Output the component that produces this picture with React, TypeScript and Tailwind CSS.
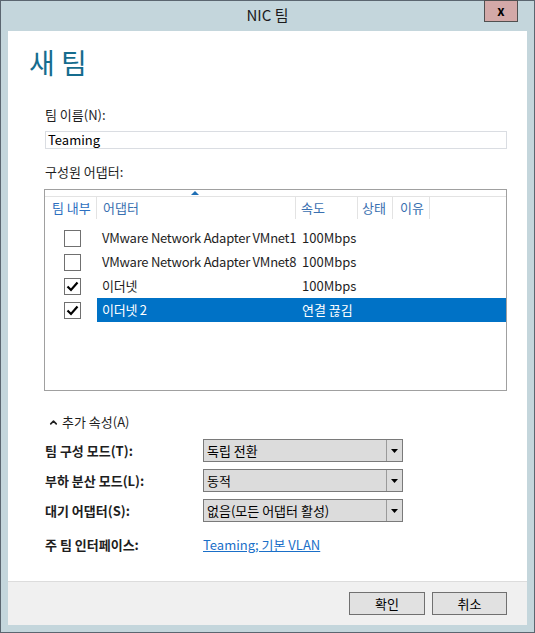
import { ChevronUp } from "lucide-react";

const FONT = "font-['Noto_Sans_CJK_KR','Noto_Sans',sans-serif]";

type Adapter = {
  name: string;
  checked: boolean;
  speed: string;
  selected?: boolean;
};

const ADAPTERS: Adapter[] = [
  { name: "VMware Network Adapter VMnet1", checked: false, speed: "100Mbps" },
  { name: "VMware Network Adapter VMnet8", checked: false, speed: "100Mbps" },
  { name: "이더넷", checked: true, speed: "100Mbps" },
  { name: "이더넷 2", checked: true, speed: "연결 끊김", selected: true },
];

function CheckBox({ checked }: { checked: boolean }) {
  return (
    <div className="w-[17px] h-[17px] border border-[#707070] bg-white flex items-center justify-center">
      {checked && (
        <svg width="13" height="11" viewBox="0 0 13 11">
          <path d="M1.5 5.5 L5 9 L11.5 1.5" fill="none" stroke="#000" strokeWidth="2.2" />
        </svg>
      )}
    </div>
  );
}

function Select({ value }: { value: string }) {
  return (
    <div className="w-[200px] h-[23px] border border-[#7a7a7a] bg-[#dcdcdc] flex">
      <div className="flex-1 pl-[3px] leading-[21px] text-[13px] text-[#000]">{value}</div>
      <div className="w-[16px] border-l border-[#9a9a9a] flex items-center justify-center">
        <svg width="7" height="4" viewBox="0 0 7 4">
          <path d="M0 0 H7 L3.5 4 Z" fill="#000" />
        </svg>
      </div>
    </div>
  );
}

export default function App() {
  return (
    <div className={`${FONT} w-[535px] h-[633px] bg-[#c4d6dc] border border-[#5b6670] flex flex-col`}>
      {/* Title bar */}
      <div className="relative h-[30px] flex items-center justify-center">
        <span className="text-[15px] text-[#1b1b1b] -mt-[2px]">NIC 팀</span>
        <div className="absolute right-[16px] -top-[1px] w-[34px] h-[22px] bg-[#d3a9a8] border border-[#505050] flex items-center justify-center">
          <span className="text-[13px] font-bold text-[#000] leading-none -mt-[2px]">x</span>
        </div>
      </div>

      {/* Client area */}
      <div className="mx-[7px] mb-[7px] flex-1 flex flex-col">
        <div className="h-[550px] bg-white flex flex-col">
          <div className="pl-[21px] pt-[13px] h-[60px] text-[28px] leading-[36px] text-[#156c8e]">새 팀</div>

          <div className="pl-[37px] pr-[20px] flex flex-col">
            <div className="mt-[14px] h-[20px] text-[13px] leading-[20px] text-[#1e1e1e]">팀 이름(N):</div>
            <div className="mt-[6px] h-[18px] border border-[#dadde2] pl-[2px] text-[13px] leading-[16px] text-[#000]">
              Teaming
            </div>

            <div className="mt-[13px] h-[20px] text-[13px] leading-[20px] text-[#1e1e1e]">구성원 어댑터:</div>

            {/* Adapter list */}
            <div className="mt-[7px] -ml-[1px] h-[202px] border border-[#a0a0a0] flex flex-col">
              <div className="relative h-[7px] border-b border-[#e3e3e3]">
                <svg className="absolute left-[146px] top-[1px]" width="8" height="4" viewBox="0 0 8 4">
                  <path d="M0 4 L4 0 L8 4 Z" fill="#1f6fb5" />
                </svg>
              </div>
              <div className="h-[22px] flex text-[13px] leading-[22px] text-[#3a70b0]">
                <div className="w-[52px] pl-[7px] border-r border-[#e3e3e3] text-[#2c6fc0]">팀 내부</div>
                <div className="w-[199px] pl-[6px] border-r border-[#e3e3e3]">어댑터</div>
                <div className="w-[62px] pl-[5px] border-r border-[#e3e3e3]">속도</div>
                <div className="w-[35px] pl-[4px] border-r border-[#e3e3e3]">상태</div>
                <div className="w-[37px] pl-[7px] border-r border-[#e3e3e3]">이유</div>
              </div>
              <div className="mt-[7px] flex flex-col">
                {ADAPTERS.map((a) => (
                  <div key={a.name} className="h-[24px] flex items-center">
                    <div className="w-[52px] pl-[19px] flex items-center">
                      <CheckBox checked={a.checked} />
                    </div>
                    <div
                      className={`flex-1 h-[24px] flex items-center text-[13px] ${
                        a.selected ? "bg-[#0072c6] text-white" : "text-[#1e1e1e]"
                      }`}
                    >
                      <div className="w-[200px] pl-[5px] whitespace-nowrap tracking-[-0.25px]">{a.name}</div>
                      <div className="pl-[5px]">{a.speed}</div>
                    </div>
                  </div>
                ))}
              </div>
            </div>

            {/* Additional properties */}
            <div className="mt-[21px] h-[20px] flex items-center gap-[3px] text-[13px] text-[#1e1e1e]">
              <ChevronUp size={11} strokeWidth={3.5} className="ml-[3px] text-[#1e1e1e]" />
              <span>추가 속성(A)</span>
            </div>

            <div className="mt-[7px] grid grid-cols-[158px_200px] gap-y-[7px] items-center text-[13px] text-[#1e1e1e]">
              <div className="font-bold">팀 구성 모드(T):</div>
              <Select value="독립 전환" />
              <div className="font-bold">부하 분산 모드(L):</div>
              <Select value="동적" />
              <div className="font-bold">대기 어댑터(S):</div>
              <Select value="없음(모든 어댑터 활성)" />
              <div className="font-bold mt-[6px]">주 팀 인터페이스:</div>
              <div className="mt-[6px] text-[#1a6fc8] underline">Teaming; 기본 VLAN</div>
            </div>
          </div>
        </div>

        {/* Footer */}
        <div className="flex-1 bg-[#f0f0f0] border-t border-[#dcdcdc] flex justify-end items-start pt-[10px] pr-[20px] gap-[7px]">
          <button className="w-[76px] h-[23px] bg-[#e1e1e1] border border-[#707070] text-[13px] text-[#000]">확인</button>
          <button className="w-[75px] h-[23px] bg-[#e1e1e1] border border-[#707070] text-[13px] text-[#000]">취소</button>
        </div>
      </div>
    </div>
  );
}
